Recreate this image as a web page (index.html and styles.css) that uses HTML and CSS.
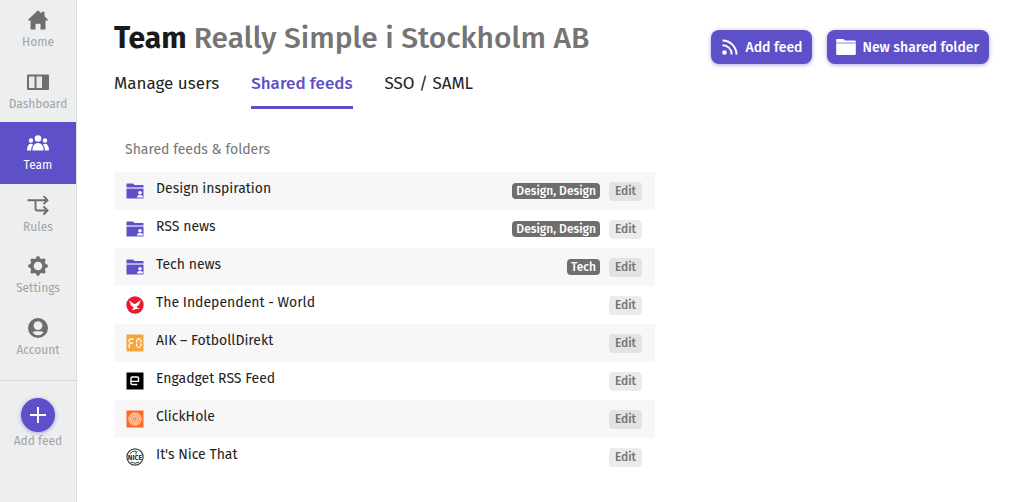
FILE: index.html
```html
<!DOCTYPE html>
<html lang="en">
<head>
<meta charset="utf-8">
<meta name="viewport" content="width=device-width, initial-scale=1">
<title>Team – Shared feeds</title>
<link rel="stylesheet" href="styles.css">
</head>
<body>
<svg class="sprite" aria-hidden="true">
  <symbol id="shared-folder" viewBox="0 0 18 16">
    <path fill="#5d50c9" d="M1 .5h6l1.500 1.500H17Q17.500 2 17.500 2.500V4.500H.5V1Q.5.5 1 .5zM.5 6H17.500V15Q17.500 15.500 17 15.500H1Q.5 15.500.5 15z"/>
    <path fill="#b8b1ec" d="M.5 4.300h17V6H.5z"/>
    <circle cx="14" cy="9.800" r="1.800" fill="#fff"/>
    <path fill="#fff" d="M11 14.400q0-2.300 3-2.300t3 2.300z"/>
  </symbol>
</svg>
<div class="app">
  <aside class="sidebar">
    <nav class="nav" aria-label="Main">
      <a class="nav-item" href="#home">
        <svg class="nav-icon" viewBox="0 0 24 24"><path fill="currentColor" d="M12 2.300l3.500 3.200V3.800h3v4.500L22 11.700v.8h-2.500V21q0 .5-.5.500h-4.500v-5q0-.8-.8-.8h-3.400q-.8 0-.8.8v5H5q-.5 0-.5-.5v-8.500H2v-.8z"/></svg>
        <span>Home</span>
      </a>
      <a class="nav-item" href="#dashboard">
        <svg class="nav-icon" viewBox="0 0 24 24"><rect x="1" y="4.500" width="22" height="15.500" rx="1" fill="currentColor"/><path fill="#fff" fill-opacity=".85" d="M3 6.500h5.500V18H3zM10.500 6.500H16V18h-5.500z"/></svg>
        <span>Dashboard</span>
      </a>
      <a class="nav-item nav-item-active" href="#team" aria-current="page">
        <svg class="nav-icon" viewBox="0 0 24 24"><g fill="currentColor"><circle cx="12" cy="7.500" r="3.300"/><circle cx="5" cy="9.500" r="2.200"/><circle cx="19" cy="9.500" r="2.200"/><path d="M6.800 19.500q-.5 0-.4-1 .6-6.500 5.600-6.500t5.600 6.500q.1 1-.4 1zM1.500 19.500q-.6 0-.5-.8.4-5.900 4-5.900 1.200 0 2 .6-1.700 2-2 6.100zM22.500 19.500q.6 0 .5-.8-.4-5.900-4-5.900-1.200 0-2 .6 1.700 2 2 6.100z"/></g></svg>
        <span>Team</span>
      </a>
      <a class="nav-item" href="#rules">
        <svg class="nav-icon" viewBox="0 0 24 24"><path fill="none" stroke="currentColor" stroke-width="1.900" d="M1.500 7.200H21M17.500 3.200l4 4-4 4M9.500 7.200v8.300q0 2 2 2H21M17.500 13.500l4 4-4 4"/></svg>
        <span>Rules</span>
      </a>
      <a class="nav-item" href="#settings">
        <svg class="nav-icon" viewBox="0 0 24 24"><g fill="currentColor"><path fill-rule="evenodd" d="M12 4.200a7.800 7.800 0 1 0 0 15.600 7.800 7.800 0 0 0 0-15.600zm0 3.500a4.300 4.300 0 1 1 0 8.600 4.300 4.300 0 0 1 0-8.600z"/><path id="tooth" d="M9.300 5.500L10.900 2.200h2.200L14.700 5.500z"/><use href="#tooth" transform="rotate(45 12 12)"/><use href="#tooth" transform="rotate(90 12 12)"/><use href="#tooth" transform="rotate(135 12 12)"/><use href="#tooth" transform="rotate(180 12 12)"/><use href="#tooth" transform="rotate(225 12 12)"/><use href="#tooth" transform="rotate(270 12 12)"/><use href="#tooth" transform="rotate(315 12 12)"/></g></svg>
        <span>Settings</span>
      </a>
      <a class="nav-item" href="#account">
        <svg class="nav-icon" viewBox="0 0 24 24"><circle cx="12" cy="12" r="10" fill="currentColor"/><circle cx="12" cy="9.600" r="4.400" fill="#edeef0"/><path fill="#edeef0" d="M6.300 16.300Q8.200 14.700 12 15.300q3.800-.6 5.700 1Q15.500 19.300 12 19.300T6.300 16.300z"/></svg>
        <span>Account</span>
      </a>
    </nav>
    <a class="add-feed" href="#add">
      <span class="add-circle"><svg class="add-icon" viewBox="0 0 18 18"><path stroke="#fff" stroke-width="2" d="M9 1v16M1 9h16"/></svg></span>
      <span>Add feed</span>
    </a>
  </aside>

  <main class="main">
    <header class="header">
      <h1 class="title">Team <span class="title-org">Really Simple i Stockholm AB</span></h1>
      <div class="actions">
        <button class="button" type="button">
          <svg class="button-icon" viewBox="0 0 20 20"><circle cx="4.500" cy="15.500" r="2.300" fill="#fff"/><path fill="none" stroke="#fff" stroke-width="1.900" d="M2.500 8.300a9 9 0 0 1 9.200 9.200M2.500 3.500a14 14 0 0 1 14 14"/></svg>
          Add feed
        </button>
        <button class="button" type="button">
          <svg class="button-icon" viewBox="0 0 20 20"><path fill="#fff" d="M1 2h6.500L9 3.500h10q.8 0 .8.800V17q0 1-1 1H1.200q-1 0-1-1V2.800Q.2 2 1 2z"/><path stroke="#8b82db" d="M.2 6h19.600"/></svg>
          New shared folder
        </button>
      </div>
    </header>
    <nav class="tabs" aria-label="Team sections">
      <a class="tab" href="#users">Manage users</a>
      <a class="tab tab-active" href="#feeds" aria-current="page">Shared feeds</a>
      <a class="tab" href="#sso">SSO / SAML</a>
    </nav>

    <section class="feeds">
      <h2 class="feeds-title">Shared feeds &amp; folders</h2>
      <ul class="feed-list">
        <li class="feed"><svg class="feed-icon" viewBox="0 0 18 16"><use href="#shared-folder"/></svg><span class="feed-name">Design inspiration</span><span class="tag">Design, Design</span><button class="edit" type="button">Edit</button></li>
        <li class="feed"><svg class="feed-icon" viewBox="0 0 18 16"><use href="#shared-folder"/></svg><span class="feed-name">RSS news</span><span class="tag">Design, Design</span><button class="edit" type="button">Edit</button></li>
        <li class="feed"><svg class="feed-icon" viewBox="0 0 18 16"><use href="#shared-folder"/></svg><span class="feed-name">Tech news</span><span class="tag">Tech</span><button class="edit" type="button">Edit</button></li>
        <li class="feed"><svg class="feed-icon" viewBox="0 0 18 18"><circle cx="9" cy="9" r="8.700" fill="#ec1a2e"/><path fill="#fff" d="M3 4.500l4.800 3.300 1.200.2 1-.6 5-3.400-1 2.300-.7 2-1.300 1.500-1.300.8.800 1.500 2 .3-1.500.7H9.500l-1.500.8-2.500-.2 2-1.200-.7-1.700-1.800-1.300L4.500 8z"/></svg><span class="feed-name">The Independent - World</span><button class="edit" type="button">Edit</button></li>
        <li class="feed"><svg class="feed-icon" viewBox="0 0 18 18"><path fill="#f2a63b" d="M.5.5h17v17H.5z"/><path fill="none" stroke="#fff" stroke-width="1.300" d="M3.200 5v3.500M3.200 9.500V14M4 5h3.700M4 9h3M10.700 5.700v2.800M10.700 9.500v3M11.300 5h3M11.300 13.300h3M15 5.700v2.800M15 9.500v3"/></svg><span class="feed-name">AIK – FotbollDirekt</span><button class="edit" type="button">Edit</button></li>
        <li class="feed"><svg class="feed-icon" viewBox="0 0 18 18"><path fill="#000" d="M.5.500h17v17H.5z"/><path fill="none" stroke="#fff" stroke-width="1.400" d="M5 9.400h7.500V6q0-1-1-1h-5.500q-1 0-1 1v5.500q0 1 1 1h5.300"/></svg><span class="feed-name">Engadget RSS Feed</span><button class="edit" type="button">Edit</button></li>
        <li class="feed"><svg class="feed-icon" viewBox="0 0 18 18"><path fill="#fc6a26" d="M.5.500h17v17H.5z"/><circle cx="9" cy="9" r="6.500" fill="#fd9a66"/><g fill="none" stroke="#ffe0cc" stroke-width=".7"><circle cx="9" cy="9" r="6.200"/><ellipse cx="9" cy="9" rx="4.500" ry="4.800"/><ellipse cx="9" cy="9" rx="2.400" ry="3"/></g></svg><span class="feed-name">ClickHole</span><button class="edit" type="button">Edit</button></li>
        <li class="feed"><svg class="feed-icon" viewBox="0 0 18 18"><circle cx="9" cy="9" r="8.100" fill="#fff" stroke="#444" stroke-width="1.200"/><path fill="none" stroke="#444" d="M4 5.800Q6.500 2.500 10 3.200M5 14q4 2.500 8 0M10 6.500Q9.500 3 11.500 3.500"/><text x="9" y="12" class="nice-text">NICE</text></svg><span class="feed-name">It's Nice That</span><button class="edit" type="button">Edit</button></li>
      </ul>
    </section>
  </main>
</div>
</body>
</html>
```
FILE: styles.css
```css
* { box-sizing: border-box; }

body {
  margin: 0;
  font-family: "Fira Sans", "Noto Sans", sans-serif;
  font-size: 14px;
  color: #222;
  background: #fff;
}

a { color: inherit; text-decoration: none; }
svg { display: block; }
button { border: 0; font-family: inherit; cursor: pointer; }

.sprite { display: none; }

.app { display: flex; min-height: 100vh; }

.sidebar {
  flex: 0 0 77px;
  background: #edeef0;
  border-right: 1px solid #dcdddf;
  font-size: 12px;
  line-height: 16px;
  color: #a3a3a3;
}

.nav {
  display: grid;
  grid-template-rows: repeat(6, 1fr);
  height: 369px;
  margin-top: -1px;
}

.nav-item {
  display: flex;
  flex-direction: column;
  align-items: center;
  gap: 2px;
  padding-top: 9px;
}

.nav-icon { width: 24px; height: 24px; color: #6e6e6e; }

.nav-item-active { background: #5d50c9; color: #fff; }
.nav-item-active .nav-icon { color: #fff; }

.add-feed {
  display: flex;
  flex-direction: column;
  align-items: center;
  gap: 1px;
  margin-top: 12px;
  padding-top: 17px;
  border-top: 1px solid #d6d7d9;
}

.add-circle {
  display: grid;
  place-items: center;
  width: 34px;
  height: 34px;
  border-radius: 50%;
  background: #5d50c9;
  box-shadow: 0 1px 4px rgba(93, 80, 201, .5);
}

.add-icon { width: 18px; height: 18px; }

.main { flex: 1; min-width: 0; padding: 16px 35px 32px 37px; }

.header { display: flex; justify-content: space-between; }

.title {
  margin: 0;
  font-size: 30px;
  line-height: 44px;
  font-weight: 700;
  color: #1a1a1a;
}

.title-org { font-weight: 500; color: #757575; }

.actions { display: flex; align-items: flex-start; gap: 15px; padding-top: 14px; }

.button {
  display: flex;
  align-items: center;
  gap: 6px;
  height: 34px;
  padding: 0 10px 0 9px;
  border-radius: 8px;
  background: #5d50c9;
  color: #fff;
  font-size: 14px;
  font-weight: 500;
  white-space: nowrap;
  box-shadow: 0 1px 4px rgba(93, 80, 201, .5);
}

.button-icon { width: 20px; height: 20px; }

.tabs { display: flex; gap: 32px; margin-top: 8px; font-size: 17px; line-height: 24px; }

.tab { padding-bottom: 10px; border-bottom: 3px solid transparent; }
.tab-active { font-weight: 500; color: #5d50c9; border-color: #5d50c9; }

.feeds { max-width: 541px; padding-top: 31px; }

.feeds-title {
  margin: 0;
  padding: 0 11px;
  font-size: 14px;
  line-height: 20px;
  font-weight: 400;
  color: #757575;
}

.feed-list { margin: 12px 0 0; padding: 0; list-style: none; }

.feed {
  display: flex;
  align-items: center;
  height: 38px;
  padding: 0 13px 0 12px;
}

.feed:nth-child(odd) { background: #f7f7f7; }

.feed-icon { width: 18px; height: 18px; }

.feed-name { flex: 1; padding: 0 12px 4px; font-size: 14px; line-height: 20px; }

.tag {
  margin-right: 9px;
  padding: 0 4px;
  border-radius: 4px;
  background: #6e6e6e;
  color: #fff;
  font-size: 12px;
  line-height: 16px;
  font-weight: 500;
}

.edit {
  width: 33px;
  height: 19px;
  padding: 0;
  border-radius: 4px;
  background: rgba(0, 0, 0, .08);
  color: #757575;
  font-size: 12px;
  line-height: 18px;
  font-weight: 500;
}

.nice-text {
  font-size: 7px;
  font-weight: 700;
  text-anchor: middle;
  fill: #333;
}
```
